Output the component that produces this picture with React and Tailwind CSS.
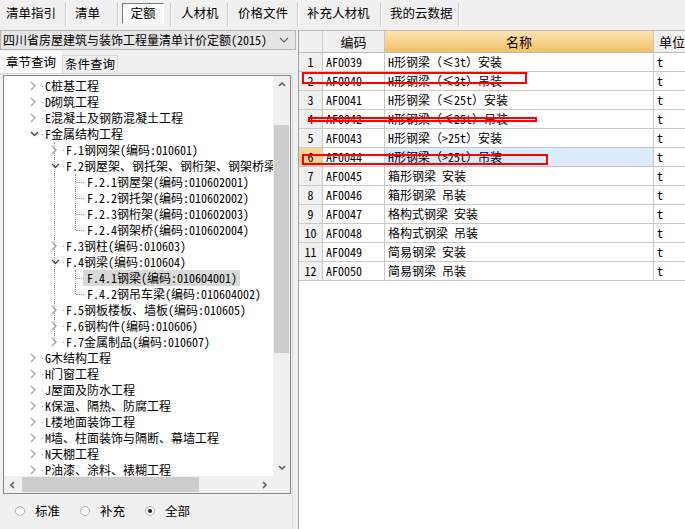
import React from 'react';

const tabs = [
  { t: '清单指引', w: 'w-[65px]', pl: 'pl-[6px]' },
  { t: '清单', w: 'w-[50px]', pl: 'pl-[8px]' },
  { t: '定额', w: 'w-[51px]', active: true },
  { t: '人材机', w: 'w-[55px]', pl: 'pl-[9px]' },
  { t: '价格文件', w: 'w-[68px]', pl: 'pl-[9px]' },
  { t: '补充人材机', w: 'w-[81px]', pl: 'pl-[8px]' },
  { t: '我的云数据', w: 'w-[76px]', pl: 'pl-[8px]' },
];

// s: 'c' collapsed, 'o' open, undefined = leaf
const tree = [
  { l: 0, t: 'C桩基工程', s: 'c' },
  { l: 0, t: 'D砌筑工程', s: 'c' },
  { l: 0, t: 'E混凝土及钢筋混凝土工程', s: 'c' },
  { l: 0, t: 'F金属结构工程', s: 'o' },
  { l: 1, t: 'F.1钢网架(编码:010601)', s: 'c' },
  { l: 1, t: 'F.2钢屋架、钢托架、钢桁架、钢架桥梁(编码:010602)', s: 'o' },
  { l: 2, t: 'F.2.1钢屋架(编码:010602001)' },
  { l: 2, t: 'F.2.2钢托架(编码:010602002)' },
  { l: 2, t: 'F.2.3钢桁架(编码:010602003)' },
  { l: 2, t: 'F.2.4钢架桥(编码:010602004)' },
  { l: 1, t: 'F.3钢柱(编码:010603)', s: 'c' },
  { l: 1, t: 'F.4钢梁(编码:010604)', s: 'o' },
  { l: 2, t: 'F.4.1钢梁(编码:010604001)', sel: true },
  { l: 2, t: 'F.4.2钢吊车梁(编码:010604002)' },
  { l: 1, t: 'F.5钢板楼板、墙板(编码:010605)', s: 'c' },
  { l: 1, t: 'F.6钢构件(编码:010606)', s: 'c' },
  { l: 1, t: 'F.7金属制品(编码:010607)', s: 'c' },
  { l: 0, t: 'G木结构工程', s: 'c' },
  { l: 0, t: 'H门窗工程', s: 'c' },
  { l: 0, t: 'J屋面及防水工程', s: 'c' },
  { l: 0, t: 'K保温、隔热、防腐工程', s: 'c' },
  { l: 0, t: 'L楼地面装饰工程', s: 'c' },
  { l: 0, t: 'M墙、柱面装饰与隔断、幕墙工程', s: 'c' },
  { l: 0, t: 'N天棚工程', s: 'c' },
  { l: 0, t: 'P油漆、涂料、裱糊工程', s: 'c' },
];

const rows = [
  ['AF0039', 'H形钢梁（≤3t）安装'],
  ['AF0040', 'H形钢梁（≤3t）吊装'],
  ['AF0041', 'H形钢梁（≤25t）安装'],
  ['AF0042', 'H形钢梁（≤25t）吊装'],
  ['AF0043', 'H形钢梁（>25t）安装'],
  ['AF0044', 'H形钢梁（>25t）吊装'],
  ['AF0045', '箱形钢梁 安装'],
  ['AF0046', '箱形钢梁 吊装'],
  ['AF0047', '格构式钢梁 安装'],
  ['AF0048', '格构式钢梁 吊装'],
  ['AF0049', '简易钢梁 安装'],
  ['AF0050', '简易钢梁 吊装'],
];

const hasNext = (i) => {
  const l = tree[i].l;
  for (let j = i + 1; j < tree.length; j++) {
    if (tree[j].l < l) return false;
    if (tree[j].l === l) return true;
  }
  return false;
};

const ancestor = (i, k) => {
  for (let j = i; j >= 0; j--) if (tree[j].l === k) return j;
  return i;
};

const Chevron = ({ open }) =>
  open ? (
    <svg className="absolute left-[7px] top-[5px]" width="9" height="6" viewBox="0 0 9 6">
      <polyline points="1,1 4.5,4.5 8,1" fill="none" stroke="#4a4a4a" strokeWidth="1.4" />
    </svg>
  ) : (
    <svg className="absolute left-[7px] top-[3px]" width="6" height="10" viewBox="0 0 6 10">
      <polyline points="1,1 5,5 1,9" fill="none" stroke="#a8a8a8" strokeWidth="1.4" />
    </svg>
  );

const TreeRow = ({ row, i }) => (
  <div className="flex h-4 whitespace-nowrap">
    <div className="w-[19px] shrink-0" />
    {Array.from({ length: row.l + 1 }).map((_, k) => {
      const own = k === row.l;
      let vline = null;
      if (k >= 1) {
        if (own) vline = hasNext(i) ? 'full' : 'half';
        else vline = hasNext(ancestor(i, k)) ? 'full' : null;
      }
      return (
        <div key={k} className="relative w-[21px] shrink-0">
          {vline && (
            <div
              className={`absolute left-[10px] top-0 border-l border-dotted border-[#9a9a9a] ${
                vline === 'full' ? 'h-4' : 'h-2'
              }`}
            />
          )}
          {own && !row.s && (
            <div className="absolute left-[11px] top-[8px] w-[8px] border-t border-dotted border-[#9a9a9a]" />
          )}
          {own && row.s && <div className="absolute right-[1px] top-[8px] h-px w-px bg-[#9a9a9a]" />}
          {own && row.s && <Chevron open={row.s === 'o'} />}
        </div>
      );
    })}
    <span className={`ml-[-3px] pl-[4px] pr-[3px] leading-4 ${row.sel ? 'bg-[#d9d9d9]' : ''}`}>{row.t}</span>
  </div>
);

const Radio = ({ label, checked }) => (
  <div className="flex items-center gap-[10px]">
    <div className="flex h-[10px] w-[10px] items-center justify-center rounded-full border border-[#b0b0b0] bg-white">
      {checked && <div className="h-[4px] w-[4px] rounded-full bg-[#222]" />}
    </div>
    <span>{label}</span>
  </div>
);

export default function App() {
  return (
    <div className="flex h-[529px] w-[685px] flex-col overflow-hidden bg-[#f0f0f0] font-['Noto_Sans_Mono_CJK_SC','Noto_Sans_CJK_SC',sans-serif] text-[12px] text-black">
      {/* toolbar */}
      <div className="flex h-[30px] shrink-0 items-stretch">
        {tabs.map((tab) => (
          <React.Fragment key={tab.t}>
            <div className={`flex shrink-0 items-center text-[12.5px] ${tab.w} ${tab.pl || ''}`}>
              {tab.active ? (
                <div className="ml-[3px] mt-[-3px] flex h-[21px] w-[42px] items-center justify-center border border-b-white border-l-[#7a7a7a] border-r-white border-t-[#7a7a7a] bg-[#f9f9f9]">
                  {tab.t}
                </div>
              ) : (
                <span className="mt-[-3px]">{tab.t}</span>
              )}
            </div>
            <div className="my-[2px] mb-[4px] w-[2px] shrink-0 border-l border-r border-l-[#c9c9c9] border-r-white" />
          </React.Fragment>
        ))}
      </div>

      <div className="flex min-h-0 flex-1">
        {/* left panel */}
        <div className="flex w-[296px] shrink-0 flex-col">
          <div className="flex h-[20px] shrink-0 items-center justify-between border border-[#b5b5b5] bg-[#e5e5e5] pl-[2px] pr-[6px] text-[12px]">
            <span>四川省房屋建筑与装饰工程量清单计价定额(2015)</span>
            <svg width="10" height="6" viewBox="0 0 10 6">
              <polyline points="1,1 5,5 9,1" fill="none" stroke="#666" strokeWidth="1.1" />
            </svg>
          </div>
          <div className="flex h-[23px] shrink-0 items-end pt-[1px] text-[12.5px]">
            <div className="flex h-full w-[62px] items-center justify-center bg-[#fbfbfb]">章节查询</div>
            <div className="flex h-[18px] w-[56px] items-center justify-center border border-b-0 border-[#d9d9d9] bg-[#f0f0f0]">
              条件查询
            </div>
          </div>
          <div className="flex w-[293px] flex-1 flex-col border-r border-t border-[#d9d9d9] pl-[3px] pr-px pt-px">
            <div className="flex h-[419px] shrink-0 flex-col border border-[#828790] bg-white">
              <div className="flex min-h-0 flex-1">
                <div className="w-[269px] overflow-hidden pt-[2px]">
                  {tree.map((row, i) => (
                    <TreeRow key={i} row={row} i={i} />
                  ))}
                </div>
                <div className="flex w-[17px] flex-col bg-[#f0f0f0]">
                  <div className="flex h-[17px] items-center justify-center">
                    <svg width="8" height="5" viewBox="0 0 8 5">
                      <polyline points="1,4 4,1 7,4" fill="none" stroke="#606060" strokeWidth="1.6" />
                    </svg>
                  </div>
                  <div className="mx-px mt-[32px] h-[228px] bg-[#cdcdcd]" />
                  <div className="flex-1" />
                  <div className="flex h-[17px] items-center justify-center">
                    <svg width="8" height="5" viewBox="0 0 8 5">
                      <polyline points="1,1 4,4 7,1" fill="none" stroke="#606060" strokeWidth="1.6" />
                    </svg>
                  </div>
                </div>
              </div>
              <div className="flex h-[17px] shrink-0 bg-[#f0f0f0]">
                <div className="flex w-[17px] items-center justify-center">
                  <svg width="5" height="8" viewBox="0 0 5 8">
                    <polyline points="4,1 1,4 4,7" fill="none" stroke="#606060" strokeWidth="1.6" />
                  </svg>
                </div>
                <div className="my-px ml-px h-[15px] w-[177px] bg-[#cdcdcd]" />
                <div className="flex-1" />
                <div className="flex w-[17px] items-center justify-center">
                  <svg width="5" height="8" viewBox="0 0 5 8">
                    <polyline points="1,1 4,4 1,7" fill="none" stroke="#606060" strokeWidth="1.6" />
                  </svg>
                </div>
                <div className="w-[17px]" />
              </div>
            </div>
            <div className="flex flex-1 items-center gap-[20px] pb-[1px] pl-[12px] text-[12.5px]">
              <Radio label="标准" />
              <Radio label="补充" />
              <Radio label="全部" checked />
            </div>
          </div>
        </div>

        {/* right panel */}
        <div className="ml-[2px] flex min-w-0 flex-1 flex-col overflow-hidden border-l border-[#a0a0a0] bg-white">
          <div className="relative">
            <div className="flex h-[23px] border-b border-t border-[#bdbdbd] text-[13px]">
              <div className="w-[24px] shrink-0 border-r border-[#c8c8c8] bg-[#f0f0f0]" />
              <div className="flex w-[62px] shrink-0 items-center justify-center border-r border-[#c8c8c8] bg-[#f0f0f0]">
                编码
              </div>
              <div className="flex w-[269px] shrink-0 items-center justify-center border-r border-[#c8c8c8] bg-gradient-to-b from-[#fbe3b0] to-[#f2c064]">
                名称
              </div>
              <div className="flex w-[60px] shrink-0 items-center bg-[#f0f0f0] pl-[5px]">单位</div>
            </div>
            {rows.map(([code, name], i) => (
              <div key={code} className="flex h-[19px] border-b border-[#c8c8c8]">
                <div
                  className={`flex w-[24px] shrink-0 items-center justify-center border-r border-[#c8c8c8] ${
                    i === 5 ? 'bg-[#f9d591]' : 'bg-[#f0f0f0]'
                  }`}
                >
                  {i + 1}
                </div>
                <div className="flex w-[62px] shrink-0 items-center border-r border-[#c8c8c8] pl-[3px]">{code}</div>
                <div
                  className={`flex w-[269px] shrink-0 items-center border-r border-[#c8c8c8] pl-[3px] ${
                    i === 5 ? 'bg-[#ddecfc]' : ''
                  }`}
                >
                  {name}
                </div>
                <div className="flex w-[60px] shrink-0 items-center pl-[3px]">t</div>
              </div>
            ))}
            {/* red annotation boxes */}
            <div className="absolute left-[3px] top-[42px] h-[12px] w-[225px] border-2 border-[#ff0000]" />
            <div className="absolute left-[9px] top-[87px] h-[5px] w-[229px] border-2 border-[#ff0000]" />
            <div className="absolute left-[3px] top-[124px] h-[11px] w-[246px] border-2 border-[#ff0000]" />
          </div>
        </div>
      </div>
    </div>
  );
}
